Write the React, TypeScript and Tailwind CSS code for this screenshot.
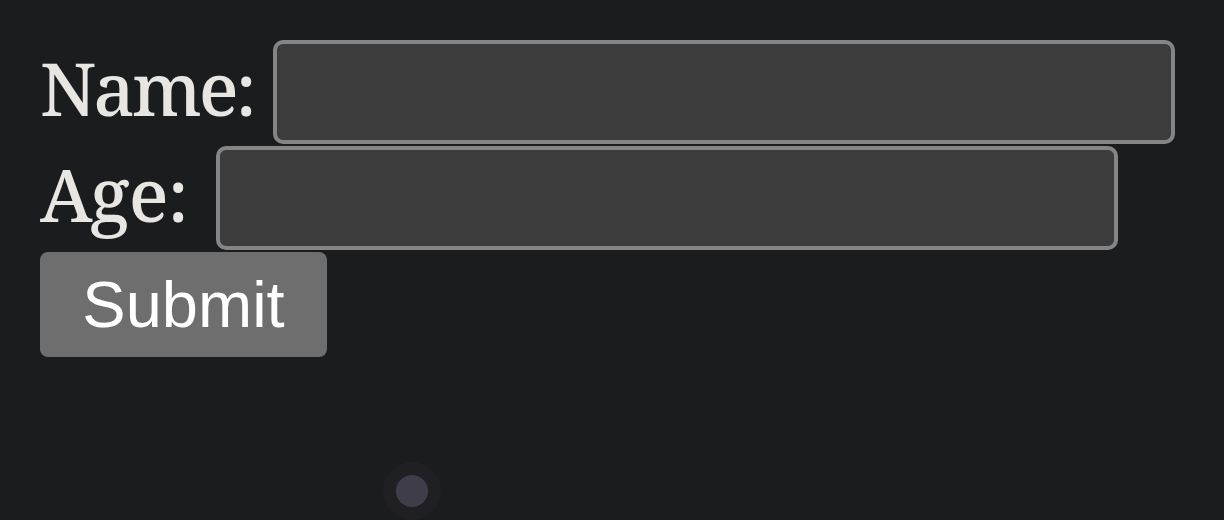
const App = () => {
    return (
        <div className="min-h-[520px] w-full bg-[#1b1c1e] relative overflow-hidden">
            <form className="flex flex-col items-start gap-[2px] pl-[40px] pt-[40px]" onSubmit={(e) => e.preventDefault()}>
                <div className="flex items-center gap-[19px]">
                    <label htmlFor="name" className="pb-[10px] text-[73px] leading-none tracking-[-3px] font-medium text-[#e8e6e3] font-['Noto_Serif',serif]">Name:</label>
                    <input type="text" id="name" name="name" className="w-[902px] h-[104px] bg-[#3c3c3c] border-4 border-[#858585] rounded-[10px] outline-none" />
                </div>
                <div className="flex items-center gap-[28px]">
                    <label htmlFor="age" className="pb-[10px] text-[73px] leading-none tracking-[-1px] font-medium text-[#e8e6e3] font-['Noto_Serif',serif]">Age:</label>
                    <input type="text" id="age" name="age" className="w-[902px] h-[104px] bg-[#3c3c3c] border-4 border-[#858585] rounded-[10px] outline-none" />
                </div>
                <button type="submit" className="h-[105px] w-[287px] bg-[#6e6e6e] rounded-[8px] text-white text-[65px] font-['Liberation_Sans',sans-serif]">Submit</button>
            </form>
            <div className="absolute left-[383px] top-[462px] w-[58px] h-[58px] rounded-full bg-[#202024] flex items-center justify-center">
                <div className="w-[32px] h-[32px] rounded-full bg-[#3f3d4a]"></div>
            </div>
        </div>
    );
};

export default App;
